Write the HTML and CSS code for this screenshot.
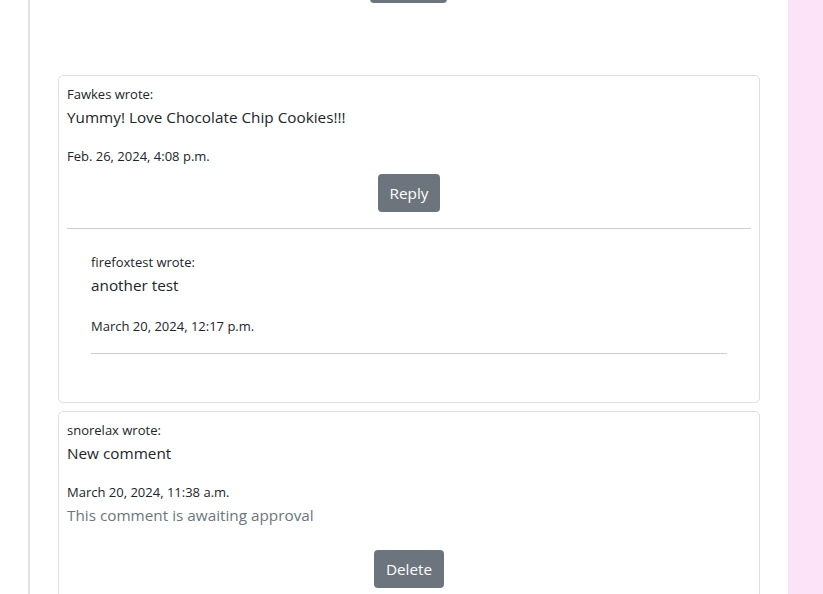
FILE: index.html
```html
<!DOCTYPE html>
<html>
<head>
<meta charset="utf-8">
<link rel="stylesheet" href="styles.css">
</head>
<body>
<div class="page">
  <div class="gutter"></div>
  <main class="main">
    <div class="top-action"><button class="btn btn-top" aria-label="Submit"></button></div>
    <section class="comments">
      <article class="card">
        <p class="author">Fawkes wrote:</p>
        <p class="body">Yummy! Love Chocolate Chip Cookies!!!</p>
        <p class="date">Feb. 26, 2024, 4:08 p.m.</p>
        <div class="actions"><button class="btn">Reply</button></div>
        <hr class="rule">
        <div class="reply">
          <p class="author">firefoxtest wrote:</p>
          <p class="body">another test</p>
          <p class="date">March 20, 2024, 12:17 p.m.</p>
          <hr class="rule">
        </div>
      </article>
      <article class="card">
        <p class="author">snorelax wrote:</p>
        <p class="body">New comment</p>
        <p class="date">March 20, 2024, 11:38 a.m.</p>
        <p class="pending">This comment is awaiting approval</p>
        <div class="actions actions-delete"><button class="btn">Delete</button></div>
      </article>
    </section>
  </main>
  <div class="side"></div>
</div>
</body>
</html>
```
FILE: styles.css
```css
* { box-sizing: border-box; }
html, body { margin: 0; padding: 0; }
body {
  font-family: "Open Sans", "Noto Sans", sans-serif;
  color: #212529;
  background: #fff;
  overflow: hidden;
  height: 594px;
}
.page {
  display: flex;
  height: 594px;
}
.gutter {
  width: 28px;
  flex: none;
  background: #fff;
}
.main {
  width: 761px;
  flex: none;
  border-left: 2px solid #e2e2e2;
  border-right: 1px solid #f3e6f0;
  padding: 0 28px 0 28px;
  background: #fff;
}
.side {
  flex: 1;
  background: #fce3f8;
}
.top-action {
  display: flex;
  justify-content: center;
  height: 3px;
  overflow: visible;
  margin-bottom: 72px;
}
.btn-top {
  margin-top: -35px;
  width: 77px;
  margin-left: -1px;
}
.comments {
  display: flex;
  flex-direction: column;
  gap: 8px;
}
.card {
  border: 1px solid #dfdfdf;
  border-radius: 5px;
  padding: 8px 8px 16px 8px;
}
.card p { margin: 0; }
.author {
  font-size: 13px;
  line-height: 21px;
}
.body {
  font-size: 15.3px;
  line-height: 24px;
  margin-bottom: 17px !important;
}
.date {
  font-size: 13px;
  line-height: 21px;
}
.pending {
  font-size: 15.3px;
  line-height: 24px;
  color: #6c757d;
}
.actions {
  display: flex;
  justify-content: center;
  margin-top: 7px;
}
.actions-delete { margin-top: 23px; }
.btn {
  font-family: inherit;
  font-size: 15.3px;
  line-height: 24px;
  color: #fff;
  background: #6c757d;
  border: none;
  border-radius: 4px;
  padding: 7px 12px;
  height: 38px;
}
.rule {
  border: none;
  border-top: 1px solid #cfcfcf;
  margin: 16px 0;
}
.reply {
  padding: 7px 24px 16px 24px;
}
.reply .body { margin-bottom: 19px !important; }
```
